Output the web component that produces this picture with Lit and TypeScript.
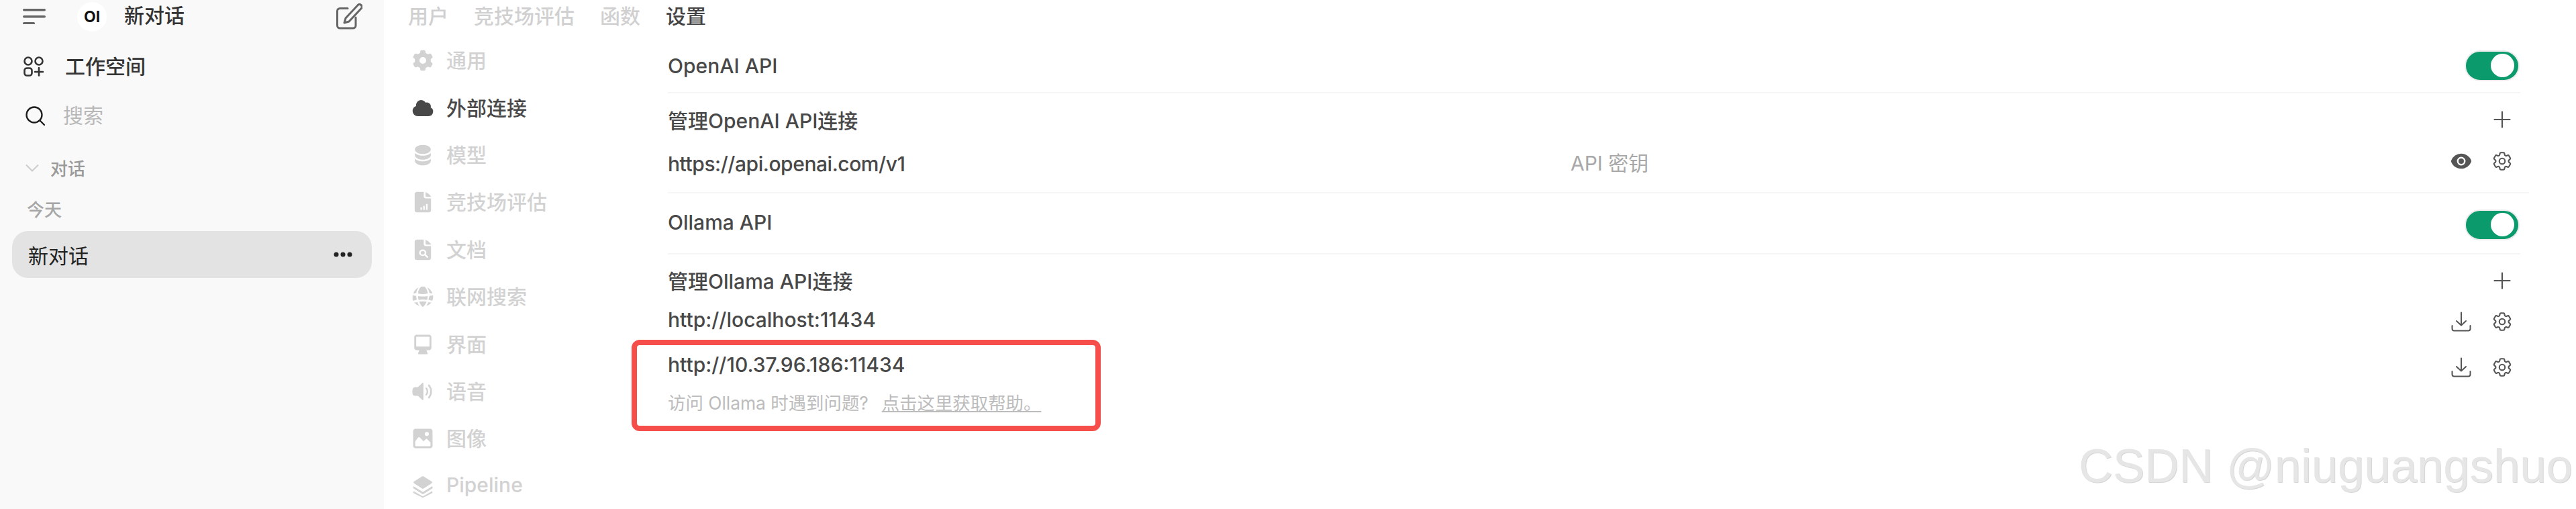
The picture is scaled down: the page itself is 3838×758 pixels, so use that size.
import { LitElement, html, css, svg } from "lit";
import { customElement } from "lit/decorators.js";

const cogSolid = svg`<path fill="currentColor" fill-rule="evenodd" d="M7.84 1.804A1 1 0 0 1 8.82 1h2.36a1 1 0 0 1 .98.804l.331 1.652a6.993 6.993 0 0 1 1.929 1.115l1.598-.54a1 1 0 0 1 1.186.447l1.18 2.044a1 1 0 0 1-.205 1.251l-1.267 1.113a7.047 7.047 0 0 1 0 2.228l1.267 1.113a1 1 0 0 1 .206 1.25l-1.18 2.045a1 1 0 0 1-1.187.447l-1.598-.54a6.993 6.993 0 0 1-1.929 1.115l-.33 1.652a1 1 0 0 1-.98.804H8.82a1 1 0 0 1-.98-.804l-.331-1.652a6.993 6.993 0 0 1-1.929-1.115l-1.598.54a1 1 0 0 1-1.186-.447l-1.18-2.044a1 1 0 0 1 .205-1.251l1.267-1.114a7.05 7.05 0 0 1 0-2.227L1.821 7.773a1 1 0 0 1-.206-1.25l1.18-2.045a1 1 0 0 1 1.187-.447l1.598.54A6.992 6.992 0 0 1 7.51 3.456l.33-1.652ZM10 13a3 3 0 1 0 0-6 3 3 0 0 0 0 6Z"/>`;
const cloud = svg`<path fill="currentColor" d="M1 12.5A4.5 4.5 0 0 0 5.5 17H15a4 4 0 0 0 1.866-7.539 3.504 3.504 0 0 0-4.504-4.272A4.5 4.5 0 0 0 4.06 8.235 4.502 4.502 0 0 0 1 12.5Z"/>`;
const stack = svg`<path fill="currentColor" d="M10 1c3.866 0 7 1.79 7 4s-3.134 4-7 4-7-1.79-7-4 3.134-4 7-4Zm5.694 8.13c.464-.264.91-.583 1.306-.952V10c0 2.21-3.134 4-7 4s-7-1.79-7-4V8.178c.396.37.842.688 1.306.953C5.838 10.006 7.854 10.5 10 10.5s4.162-.494 5.694-1.37ZM3 13.179V15c0 2.21 3.134 4 7 4s7-1.79 7-4v-1.822c-.396.37-.842.688-1.306.953-1.532.875-3.548 1.369-5.694 1.369s-4.162-.494-5.694-1.37A7.009 7.009 0 0 1 3 13.179Z"/>`;
const docBase = "M4.5 1h5.3v4.2c0 .9.7 1.6 1.6 1.6h4.1v10.4c0 1-.8 1.8-1.8 1.8H4.5c-1 0-1.8-.8-1.8-1.8V2.8C2.7 1.8 3.5 1 4.5 1Z";
const docFold = "M11.2 1.2c2.1.9 3.7 2.6 4.5 4.3h-3.6c-.5 0-.9-.4-.9-.9Z";
const docChart = svg`<g transform="translate(10 10) scale(1.12 1) translate(-9.1 -10)"><path fill="currentColor" d="${docBase}"/><path fill="currentColor" d="${docFold}"/><path fill="#fff" d="M7.2 14.6h1.2v2.2H7.2ZM9.4 13.2h1.2v3.6H9.4ZM11.6 11.6h1.2v5.2h-1.2Z"/></g>`;
const docSearch = svg`<g transform="translate(10 10) scale(1.12 1) translate(-9.1 -10)"><path fill="currentColor" d="${docBase}"/><path fill="currentColor" d="${docFold}"/><circle cx="9" cy="12.6" r="2.2" fill="none" stroke="#fff" stroke-width="1.3"/><path d="m10.7 14.3 2 2" stroke="#fff" stroke-width="1.3" stroke-linecap="round"/></g>`;
const globe = svg`<path fill="currentColor" d="M8.6 1.1C6.9 2.6 5.9 4.6 5.7 7.1c1.3.4 2.8.6 4.3.6s3-.2 4.3-.6c-.2-2.5-1.2-4.5-2.9-6a9 9 0 0 0-2.8 0ZM6.4 1.8A9 9 0 0 0 1.6 7c.9.1 1.8-.1 2.7-.5.2-1.8 1-3.4 2.1-4.7ZM13.6 1.8a9 9 0 0 1 4.8 5.2c-.9.1-1.8-.1-2.7-.5-.2-1.8-1-3.4-2.1-4.7ZM1 10c0-.5 0-.9.1-1.4 1 .4 2.1.6 3.1.5 0 1.2.2 2.3.5 3.4-1.1.5-2.2.8-3.4.9A9 9 0 0 1 1 10ZM5.8 9.4c2.8.5 5.6.5 8.4 0 0 1.2-.2 2.3-.5 3.4-2.5-.5-4.9-.5-7.4 0-.3-1.1-.5-2.2-.5-3.4ZM15.8 9.1c1 .1 2.1-.1 3.1-.5.1.5.1.9.1 1.4 0 1.2-.2 2.3-.7 3.4-1.2-.1-2.3-.4-3.4-.9.3-1.1.5-2.2.9-3.4ZM2.3 14.9c1 .1 2 .1 2.9-.2.4 1.3 1.1 2.4 2 3.3a9 9 0 0 1-4.9-3.1ZM6.8 14.3c2.1-.4 4.3-.4 6.4 0-.6 1.9-1.7 3.5-3.2 4.7-1.5-1.2-2.6-2.8-3.2-4.7ZM14.8 14.7c.9.3 1.9.3 2.9.2a9 9 0 0 1-4.9 3.1c.9-.9 1.6-2 2-3.3Z"/>`;
const desktop = svg`<path fill="currentColor" fill-rule="evenodd" d="M4.5 1.5h11c1.1 0 2 .9 2 2V13c0 1.1-.9 2-2 2h-2.3c.1.9.4 1.7.9 2.4.2.4 0 1.1-.6 1.1H6.5c-.6 0-.8-.7-.6-1.1.5-.7.8-1.5.9-2.4H4.5c-1.1 0-2-.9-2-2V3.5c0-1.1.9-2 2-2Zm0 1.8c-.2 0-.3.1-.3.3v7.9c0 .2.1.3.3.3h11c.2 0 .3-.1.3-.3V3.6c0-.2-.1-.3-.3-.3Z"/>`;
const speaker = svg`<path fill="currentColor" d="M9.5 2.6c.4-.4 1-.1 1 .5v13.8c0 .6-.6.9-1 .5l-3.9-3.6H3.2C2.1 13.8 1.2 13 1 12a9.5 9.5 0 0 1 0-4c.2-1 1.1-1.8 2.2-1.8h2.4Z"/><path fill="none" stroke="currentColor" stroke-width="1.5" stroke-linecap="round" d="M13 7.2a4.5 4.5 0 0 1 0 5.6M15.3 4.6a8.5 8.5 0 0 1 0 10.8"/>`;
const photo = svg`<path fill="currentColor" fill-rule="evenodd" d="M3.5 1.5h13c1.1 0 2 .9 2 2v13c0 1.1-.9 2-2 2h-13c-1.1 0-2-.9-2-2v-13c0-1.1.9-2 2-2Zm-.2 11v3.7c0 .3.2.5.5.5h12.4c.3 0 .5-.2.5-.5v-2.7l-3-3c-.3-.3-.8-.3-1 0l-2 2-3.4-3.4c-.4-.4-1-.4-1.4 0Zm10.2-8.2a1.8 1.8 0 1 0 0 3.6 1.8 1.8 0 0 0 0-3.6Z"/>`;
const layers = svg`<path fill="currentColor" d="M9.3 1.4c.4-.2 1-.2 1.4 0l7 4.5c.6.4.6 1.2 0 1.6l-7 4.5c-.4.2-1 .2-1.4 0l-7-4.5c-.6-.4-.6-1.2 0-1.6Z"/><path fill="currentColor" d="m2 10.2 7.5 4.7c.3.2.7.2 1 0l7.5-4.7c.4.3.7.7.6 1.1 0 .3-.2.6-.5.8l-7.4 4.6c-.4.2-.9.2-1.3 0l-7.4-4.6c-.6-.4-.6-1.4 0-1.9Z"/><path fill="currentColor" d="m2 14.4 7.5 4.3c.3.2.7.2 1 0l7.5-4.3c.6.5.6 1.4 0 1.8l-7.3 3.6c-.5.2-.9.2-1.4 0L2 16.2c-.6-.4-.6-1.3 0-1.8Z"/>`;

const menu = [
  { icon: cogSolid, label: "通用" },
  { icon: cloud, label: "外部连接", active: true },
  { icon: stack, label: "模型" },
  { icon: docChart, label: "竞技场评估" },
  { icon: docSearch, label: "文档" },
  { icon: globe, label: "联网搜索" },
  { icon: desktop, label: "界面" },
  { icon: speaker, label: "语音" },
  { icon: photo, label: "图像" },
  { icon: layers, label: "Pipeline" },
];

const cogOutline = html`<svg class="cog" viewBox="0 0 24 24" fill="none" stroke="currentColor" stroke-width="1.5"><path stroke-linecap="round" stroke-linejoin="round" d="M9.594 3.94c.09-.542.56-.94 1.11-.94h2.593c.55 0 1.02.398 1.11.94l.213 1.281c.063.374.313.686.645.87.074.04.147.083.22.127.325.196.72.257 1.075.124l1.217-.456a1.125 1.125 0 0 1 1.37.49l1.296 2.247a1.125 1.125 0 0 1-.26 1.431l-1.003.827c-.293.241-.438.613-.43.992a7.723 7.723 0 0 1 0 .255c-.008.378.137.75.43.991l1.004.827c.424.35.534.955.26 1.43l-1.298 2.247a1.125 1.125 0 0 1-1.369.491l-1.217-.456c-.355-.133-.75-.072-1.076.124a6.47 6.47 0 0 1-.22.128c-.331.183-.581.495-.644.869l-.213 1.281c-.09.543-.56.94-1.11.94h-2.594c-.55 0-1.019-.398-1.11-.94l-.213-1.281c-.062-.374-.312-.686-.644-.87a6.52 6.52 0 0 1-.22-.127c-.325-.196-.72-.257-1.076-.124l-1.217.456a1.125 1.125 0 0 1-1.369-.49l-1.297-2.247a1.125 1.125 0 0 1 .26-1.431l1.004-.827c.292-.24.437-.613.43-.991a6.932 6.932 0 0 1 0-.255c.007-.38-.138-.751-.43-.992l-1.004-.827a1.125 1.125 0 0 1-.26-1.43l1.297-2.247a1.125 1.125 0 0 1 1.37-.491l1.216.456c.356.133.751.072 1.076-.124.072-.044.146-.086.22-.128.332-.183.582-.495.644-.869l.214-1.28Z"/><path stroke-linecap="round" stroke-linejoin="round" d="M15 12a3 3 0 1 1-6 0 3 3 0 0 1 6 0Z"/></svg>`;
const eye = html`<svg class="eye" viewBox="0 0 20 20" fill="currentColor"><path d="M10 12.5a2.5 2.5 0 1 0 0-5 2.5 2.5 0 0 0 0 5Z"/><path fill-rule="evenodd" d="M.664 10.59a1.651 1.651 0 0 1 0-1.186A10.004 10.004 0 0 1 10 3c4.257 0 7.893 2.66 9.336 6.41.147.381.146.804 0 1.186A10.004 10.004 0 0 1 10 17c-4.257 0-7.893-2.66-9.336-6.41ZM14 10a4 4 0 1 1-8 0 4 4 0 0 1 8 0Z" clip-rule="evenodd"/></svg>`;
const download = html`<svg class="dl" viewBox="0 0 30 30" fill="none" stroke="currentColor" stroke-width="2" stroke-linecap="round" stroke-linejoin="round"><path d="M15 1.5v19M8 14l7 6.5 7-6.5M1.5 21v4.5a3 3 0 0 0 3 3h21a3 3 0 0 0 3-3V21"/></svg>`;
const plus = html`<svg class="plus" viewBox="0 0 26 26" fill="none" stroke="currentColor" stroke-width="2.2" stroke-linecap="round"><path d="M13 1.5v23M1.5 13h23"/></svg>`;

@customElement("app-root")
export class AppRoot extends LitElement {
  static styles = css`
    :host {
      display: block;
      position: relative;
      width: 3838px;
      height: 758px;
      overflow: hidden;
      background: #fff;
      font-family: Inter, "Noto Sans CJK SC", sans-serif;
      font-size: 30px;
      color: #484848;
    }
    .shell { display: flex; height: 100%; }

    .side {
      width: 572px;
      flex: none;
      background: #f9f9f9;
      display: flex;
      flex-direction: column;
      box-sizing: border-box;
    }
    .head { display: flex; align-items: center; height: 50px; padding: 0 32px 0 34px; }
    .burger { width: 34px; height: 23px; color: #666; margin-top: -2px; }
    .logo {
      width: 44px; height: 44px; border-radius: 50%; background: #fff; margin-left: 47px;
      display: flex; align-items: center; justify-content: center;
      font: 700 23px/1 Inter, sans-serif; color: #111;
    }
    .title { margin: 0 0 4px 26px; font-weight: 500; color: #333; line-height: 40px; flex: 1; }
    .edit { width: 40px; height: 40px; color: #666; }
    .item { display: flex; align-items: center; height: 40px; }
    .item span { margin-bottom: 4px; }
    .work { margin-top: 29px; padding-left: 35px; gap: 32px; font-weight: 500; color: #333; }
    .work svg { width: 30px; height: 30px; color: #333; }
    .search { margin-top: 33px; padding-left: 38px; gap: 27px; color: #b8b8b8; }
    .search svg { width: 29px; height: 29px; color: #1c1c1c; }
    .section { margin-top: 38px; padding-left: 38px; gap: 17px; font-size: 26px; font-weight: 500; color: #9a9a9a; }
    .section svg { width: 20px; height: 12px; color: #ccc; }
    .section span { margin-bottom: 2px; }
    .today { margin-top: 22px; padding-left: 40px; font-size: 26px; font-weight: 500; color: #a6a6a6; }
    .chat {
      margin: 12px 18px 0;
      height: 70px;
      border-radius: 24px;
      background: #e3e3e3;
      display: flex;
      align-items: center;
      justify-content: space-between;
      padding: 0 29px 0 24px;
      color: #222;
    }
    .dots { width: 28px; height: 8px; color: #222; }

    .main { flex: 1; min-width: 0; display: flex; flex-direction: column; }
    .tabs { display: flex; gap: 38px; height: 48px; box-sizing: border-box; padding: 0 0 5px 36px; align-items: center; font-weight: 500; color: #d0d0d0; flex: none; }
    .tabs .on { color: #444; }
    .body { display: flex; flex: 1; min-height: 0; }
    .menu { width: 423px; flex: none; box-sizing: border-box; padding: 7px 0 0 40.5px; display: flex; flex-direction: column; }
    .mi { height: 70.4px; flex: none; display: flex; align-items: center; gap: 18.5px; color: #d2d2d2; font-weight: 500; }
    .mi span { margin-bottom: 4px; }
    .mi.on { color: #484848; }
    .mi svg { width: 34px; height: 34px; flex: none; }

    .content { flex: 1; min-width: 0; padding: 14px 83px 0 0; display: flex; flex-direction: column; font-weight: 450; }
    .row { display: flex; align-items: center; justify-content: space-between; flex: none; }
    .r1 { height: 75px; }
    .r1 > span, .r4 > span { margin-bottom: 3px; }
    .r2 { height: 80px; font-weight: 500; }
    .r2 > span, .r5 > span { margin-bottom: 2px; }
    .r2 .acts { margin-bottom: 2px; }
    .r3 { height: 44px; margin-bottom: 23px; }
    .r3 .acts { margin-bottom: 2px; }
    .r4 { height: 89px; }
    .r5 { height: 78px; font-weight: 500; }
    .r6 { height: 40px; }
    .r6 > span { margin-bottom: 2px; }
    .r6 .acts { margin-top: 4px; }
    .r7 { height: 40px; margin-top: 27px; }
    .r7 > span { margin-bottom: 3px; }
    .r7 .acts { margin-top: 6px; }
    .grow { flex: 1; display: flex; align-items: center; height: 44px; }
    .url { flex: 0 0 1345px; margin-top: 6px; letter-spacing: -0.45px; }
    .key { color: #a8a8a8; font-weight: 400; }
    hr { border: 0; height: 2px; margin: 0; background: #f6f6f6; flex: none; }
    hr.long { margin-right: -13px; }

    .toggle {
      width: 68px; height: 42px; border-radius: 23px; background: #0a9a6c;
      border: 2px solid #ececec; display: flex; align-items: center; justify-content: flex-end;
      padding: 0 6.5px 0 3.5px; margin: 0 1px 4px 0;
    }
    .toggle.low { margin: 4px 1px 0 0; }
    .knob { width: 35px; height: 35px; border-radius: 50%; background: #fff; }
    .acts { display: flex; align-items: center; gap: 29px; color: #555; justify-content: flex-end; margin-right: 10px; }
    .acts.one { margin-right: 14px; }
    .cog { width: 34px; height: 34px; flex: none; }
    .eye { width: 32px; height: 32px; flex: none; margin: 0 -1px; }
    .dl { width: 30px; height: 30px; flex: none; }
    .plus { width: 26px; height: 26px; flex: none; }
    .help { margin-top: 16px; height: 36px; display: flex; align-items: center; font-size: 26.4px; font-weight: 400; color: #bcbcbc; gap: 20px; }
    .help a { color: #bcbcbc; text-decoration: underline; }

    .mark { position: absolute; left: 941px; top: 506px; width: 699px; height: 136px; box-sizing: border-box; border: 8px solid #f64e4b; border-radius: 12px; pointer-events: none; }
    .wm {
      position: absolute; left: 3097px; top: 652px; white-space: nowrap;
      font: 400 70.7px/84px "Liberation Sans", sans-serif; color: #e6e6e6;
      text-shadow: 1px 1px 0 #d6d6d6;
    }
  `;

  render() {
    return html`
      <div class="shell">
        <aside class="side">
          <div class="head">
            <svg class="burger" viewBox="0 0 34 23" fill="currentColor"><rect y="0" width="34" height="3.6" rx="1.8"/><rect y="10" width="34" height="3.6" rx="1.8"/><rect y="20" width="18" height="3.6" rx="1.8"/></svg>
            <div class="logo">OI</div>
            <div class="title">新对话</div>
            <svg class="edit" viewBox="0 0 40 40" fill="none" stroke="currentColor" stroke-width="3" stroke-linecap="round" stroke-linejoin="round"><path d="M18 7.5H6.5a4 4 0 0 0-4 4V33a4 4 0 0 0 4 4H26a4 4 0 0 0 4-4V21"/><path d="M33.5 2.2a3.6 3.6 0 0 1 5 5L20 27l-7 2 2-7Z"/></svg>
          </div>
          <div class="item work">
            <svg viewBox="0 0 30 30" fill="none" stroke="currentColor" stroke-width="2.6" stroke-linecap="round"><rect x="1.5" y="1.5" width="11" height="11" rx="5.5"/><rect x="17.5" y="1.5" width="11" height="11" rx="5.5"/><rect x="1.5" y="17.5" width="11" height="11" rx="3.5"/><path d="M23 17v11.5M17 23h12"/></svg>
            <span>工作空间</span>
          </div>
          <div class="item search">
            <svg viewBox="0 0 29 29" fill="none" stroke="currentColor" stroke-width="2.3" stroke-linecap="round"><circle cx="13" cy="13" r="11.5"/><path d="m21.5 21.5 6.5 6.5"/></svg>
            <span>搜索</span>
          </div>
          <div class="item section">
            <svg viewBox="0 0 20 12" fill="none" stroke="currentColor" stroke-width="2"><path d="m1 1.5 9 9 9-9"/></svg>
            <span>对话</span>
          </div>
          <div class="item today"><span>今天</span></div>
          <div class="chat">
            <span>新对话</span>
            <svg class="dots" viewBox="0 0 28 8" fill="currentColor"><circle cx="4" cy="4" r="3.5"/><circle cx="14" cy="4" r="3.5"/><circle cx="24" cy="4" r="3.5"/></svg>
          </div>
        </aside>
        <main class="main">
          <nav class="tabs">
            <span>用户</span><span>竞技场评估</span><span>函数</span><span class="on">设置</span>
          </nav>
          <div class="body">
            <div class="menu">
              ${menu.map(
                (m) => html`<div class="mi ${m.active ? "on" : ""}"><svg viewBox="0 0 20 20">${m.icon}</svg><span>${m.label}</span></div>`
              )}
            </div>
            <div class="content">
              <div class="row r1"><span>OpenAI API</span><div class="toggle"><div class="knob"></div></div></div>
              <hr />
              <div class="row r2"><span>管理OpenAI API连接</span><div class="acts one">${plus}</div></div>
              <div class="row r3">
                <div class="grow"><span class="url">https://api.openai.com/v1</span><span class="key">API 密钥</span></div>
                <div class="acts">${eye}${cogOutline}</div>
              </div>
              <hr class="long" />
              <div class="row r4"><span>Ollama API</span><div class="toggle low"><div class="knob"></div></div></div>
              <hr />
              <div class="row r5"><span>管理Ollama API连接</span><div class="acts one">${plus}</div></div>
              <div class="row r6"><span>http://localhost:11434</span><div class="acts">${download}${cogOutline}</div></div>
              <div class="row r7"><span>http://10.37.96.186:11434</span><div class="acts">${download}${cogOutline}</div></div>
              <div class="help"><span>访问 Ollama 时遇到问题?</span><a>点击这里获取帮助。</a></div>
            </div>
          </div>
        </main>
      </div>
      <div class="mark"></div>
      <div class="wm">CSDN @niuguangshuo</div>
    `;
  }
}
